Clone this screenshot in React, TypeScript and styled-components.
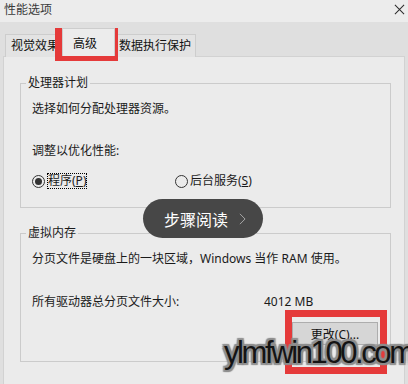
import React from 'react'
import styled, { createGlobalStyle } from 'styled-components'

const GlobalStyle = createGlobalStyle`
  html, body {
    margin: 0;
    padding: 0;
    background: #dfdfdf;
  }
  body {
    font-family: 'Noto Sans', 'Noto Sans CJK SC', sans-serif;
    font-size: 12px;
    color: #1a1a1a;
  }
`

const tabs = [
  { id: 'visual', label: '视觉效果' },
  { id: 'advanced', label: '高级' },
  { id: 'dep', label: '数据执行保护' },
]

function App() {
  return (
    <>
      <GlobalStyle />
      <Window>
        <TitleBar>
          <Title>性能选项</Title>
          <CloseIcon viewBox="0 0 12 12">
            <path d="M1 1 L11 11 M11 1 L1 11" />
          </CloseIcon>
        </TitleBar>

        <TabStrip>
          {tabs.map((t) => (
            <Tab key={t.id} $active={t.id === 'advanced'}>
              {t.label}
            </Tab>
          ))}
        </TabStrip>

        <Panel>
          <Group>
            <Legend>处理器计划</Legend>
            <Line $gap={10}>选择如何分配处理器资源。</Line>
            <Line $gap={26}>调整以优化性能:</Line>
            <RadioRow>
              <RadioItem $width={143}>
                <RadioDot $checked />
                <Focus>
                  程序(<u>P</u>)
                </Focus>
              </RadioItem>
              <RadioItem>
                <RadioDot />
                <span>
                  后台服务(<u>S</u>)
                </span>
              </RadioItem>
            </RadioRow>
          </Group>

          <Group $top={17} $bottom={16}>
            <Legend>虚拟内存</Legend>
            <Line $gap={10}>分页文件是硬盘上的一块区域，Windows 当作 RAM 使用。</Line>
            <SizeRow>
              <SizeLabel>所有驱动器总分页文件大小:</SizeLabel>
              <span>4012 MB</span>
            </SizeRow>
            <ButtonRow>
              <Button>更改(C)...</Button>
            </ButtonRow>
          </Group>
        </Panel>

        <StepPill>
          <span>步骤阅读</span>
          <Chevron viewBox="0 0 8 14">
            <path d="M1 1 L7 7 L1 13" />
          </Chevron>
        </StepPill>

        <Mark $left={55} $top={28} $width={63} $height={33} />
        <Mark $left={285} $top={310} $width={102} $height={64} />
        <Watermark>ylmfwin100.com</Watermark>
      </Window>
    </>
  )
}

const Window = styled.div`
  position: relative;
  width: 408px;
  height: 384px;
  overflow: hidden;
  background: #dfdfdf;
`

const TitleBar = styled.div`
  height: 22px;
  background: #ececec;
  display: flex;
  align-items: center;
  justify-content: space-between;
  padding: 0 3px 0 4px;
`

const Title = styled.div`
  color: #3a3a3a;
  font-size: 12px;
  line-height: 16px;
  margin-top: -2px;
`

const CloseIcon = styled.svg`
  width: 11px;
  height: 11px;
  margin-top: -3px;
  path {
    stroke: #2b2b2b;
    stroke-width: 1.1;
    fill: none;
  }
`

const TabStrip = styled.div`
  height: 35px;
  display: flex;
  align-items: flex-end;
  padding-left: 5px;
`

const Tab = styled.div<{ $active?: boolean }>`
  box-sizing: border-box;
  height: ${(p) => (p.$active ? 28 : 23)}px;
  padding: ${(p) => (p.$active ? '2px 17px 0 10px' : '0 4px 0 5px')};
  margin: ${(p) => (p.$active ? '0 -2px 1px' : '0')};
  display: flex;
  align-items: center;
  background: ${(p) => (p.$active ? '#ececec' : '#e3e3e3')};
  border: 1px solid #cdcdcd;
  border-bottom: none;
  color: #111;
  position: relative;
  z-index: ${(p) => (p.$active ? 1 : 0)};
  line-height: 16px;
`

const Panel = styled.div`
  box-sizing: border-box;
  margin: -1px 3px 0;
  height: 340px;
  background: #ebebeb;
  border: 1px solid #d2d2d2;
  display: flex;
  flex-direction: column;
`

const Group = styled.fieldset<{ $top?: number; $bottom?: number }>`
  margin: ${(p) => p.$top ?? 18}px 13px 0 16px;
  padding: 0 12px ${(p) => p.$bottom ?? 18}px 11px;
  border: 1px solid #cbcbcb;
  min-width: 0;
`

const Legend = styled.legend`
  margin-left: -6px;
  padding: 0 2px;
  line-height: 16px;
  color: #1a1a1a;
`

const Line = styled.div<{ $gap: number }>`
  margin-top: ${(p) => p.$gap}px;
  line-height: 16px;
  white-space: nowrap;
`

const RadioRow = styled.div`
  margin-top: 14px;
  display: flex;
  line-height: 16px;
`

const RadioItem = styled.label<{ $width?: number }>`
  display: flex;
  align-items: center;
  gap: 2px;
  width: ${(p) => (p.$width ? `${p.$width}px` : 'auto')};
`

const RadioDot = styled.span<{ $checked?: boolean }>`
  box-sizing: border-box;
  width: 13px;
  height: 13px;
  border-radius: 50%;
  border: 1px solid #333;
  background: #ebebeb;
  display: flex;
  align-items: center;
  justify-content: center;
  &::after {
    content: '';
    width: 7px;
    height: 7px;
    border-radius: 50%;
    background: ${(p) => (p.$checked ? '#333' : 'transparent')};
  }
`

const Focus = styled.span`
  outline: 1px dotted #000;
  outline-offset: -1px;
  padding: 0 1px;
`

const SizeRow = styled.div`
  margin-top: 27px;
  display: flex;
  line-height: 16px;
`

const SizeLabel = styled.span`
  width: 232px;
`

const ButtonRow = styled.div`
  margin-top: 12px;
  display: flex;
  justify-content: flex-end;
`

const Button = styled.button`
  box-sizing: border-box;
  width: 86px;
  height: 23px;
  background: #d6d6d6;
  border: 1px solid #adadad;
  font: inherit;
  color: #111;
  padding: 0;
`

const StepPill = styled.div`
  position: absolute;
  left: 143px;
  top: 199px;
  width: 120px;
  height: 39px;
  border-radius: 20px;
  background: #474747;
  color: #fff;
  display: flex;
  align-items: center;
  justify-content: center;
  gap: 11px;
  font-family: 'Noto Sans CJK SC', sans-serif;
  font-size: 16px;
  span {
    margin-left: 4px;
  }
`

const Chevron = styled.svg`
  width: 7px;
  height: 12px;
  path {
    stroke: #b5b5b5;
    stroke-width: 1;
    fill: none;
  }
`

const Mark = styled.div<{ $left: number; $top: number; $width: number; $height: number }>`
  position: absolute;
  box-sizing: border-box;
  left: ${(p) => p.$left}px;
  top: ${(p) => p.$top}px;
  width: ${(p) => p.$width}px;
  height: ${(p) => p.$height}px;
  border: 7px solid #e53a3a;
`

const Watermark = styled.div`
  position: absolute;
  left: 224px;
  top: 335px;
  font-family: 'Liberation Sans', sans-serif;
  font-size: 31px;
  letter-spacing: -2.4px;
  line-height: 36px;
  color: #141414;
  text-shadow:
    2px 0 1px #8d8d8d,
    -2px 0 1px #8d8d8d,
    0 2px 1px #8d8d8d,
    0 -2px 1px #8d8d8d,
    2px 2px 1px #8d8d8d,
    -2px -2px 1px #8d8d8d,
    2px -2px 1px #8d8d8d,
    -2px 2px 1px #8d8d8d;
`

export default App
